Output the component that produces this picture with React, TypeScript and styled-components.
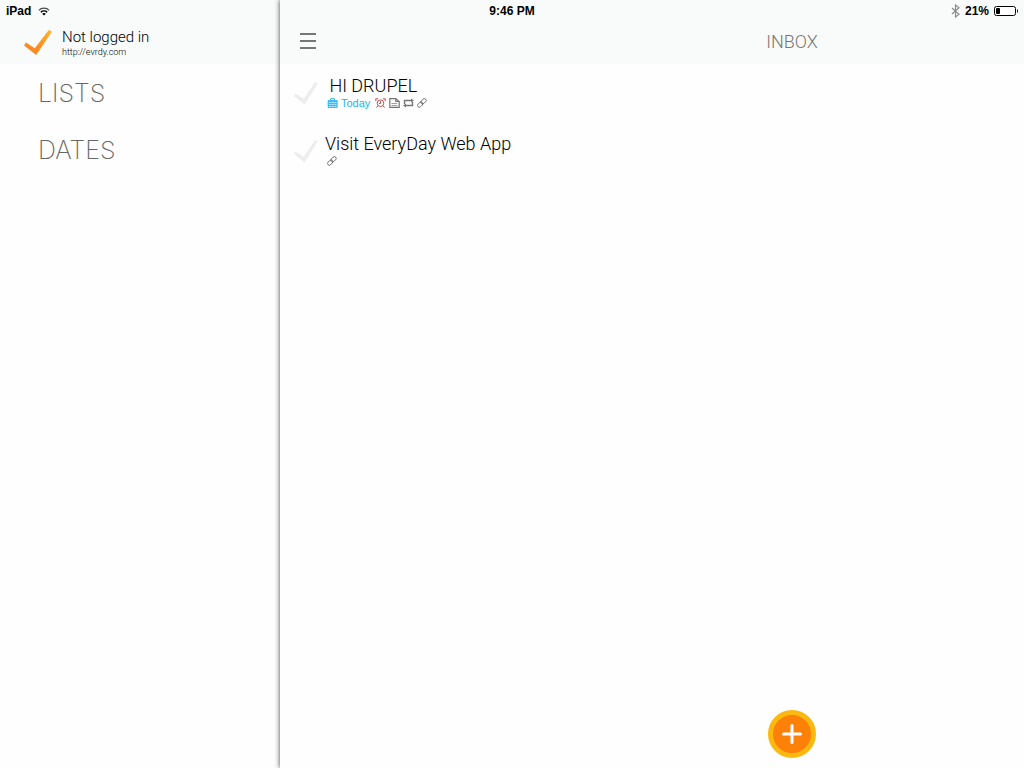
import React from 'react';
import styled, { createGlobalStyle } from 'styled-components';

const GlobalStyle = createGlobalStyle`
  *, *::before, *::after { box-sizing: border-box; }
  html, body, #root { height: 100%; margin: 0; }
  body {
    overflow: hidden;
    background: #fefefe;
    font-family: Roboto, "Liberation Sans", sans-serif;
    font-weight: 300;
    color: #000;
  }
  button { border: 0; padding: 0; background: none; font: inherit; color: inherit; cursor: pointer; }
  a { color: inherit; text-decoration: none; }
  svg { display: block; flex: none; }
`;

const Shell = styled.div`
  display: flex;
  height: 100%;
  overflow: hidden;
`;

const StatusBar = styled.div`
  position: absolute;
  top: 0;
  left: 0;
  right: 0;
  z-index: 3;
  display: grid;
  grid-template-columns: 1fr auto 1fr;
  align-items: center;
  height: 22px;
  padding: 0 6px;
  font: 700 12px/22px "Liberation Sans", sans-serif;
`;

const StatusGroup = styled.div<{ $end?: boolean }>`
  display: flex;
  align-items: center;
  gap: ${(p) => (p.$end ? 5 : 7)}px;
  justify-content: ${(p) => (p.$end ? 'flex-end' : 'flex-start')};
`;

const Sidebar = styled.aside`
  flex: 0 0 280px;
`;

const Header = styled.header`
  display: flex;
  align-items: center;
  height: 64px;
  padding: 20px 24px 0;
  background: #f9fbfa;
`;

const Account = styled.div`
  display: flex;
  align-items: center;
  gap: 10px;
`;

const AccountText = styled.div`
  display: flex;
  flex-direction: column;
`;

const AccountName = styled.span`
  font-size: 15px;
  line-height: 20px;
`;

const AccountLink = styled.a`
  font-size: 9px;
  line-height: 11px;
`;

const Nav = styled.nav`
  display: flex;
  flex-direction: column;
`;

const NavButton = styled.button`
  height: 57px;
  padding-left: 38px;
  text-align: left;
  font-family: Inter, "Liberation Sans", sans-serif;
  font-size: 25px;
  font-weight: 200;
  color: #666;
`;

const Main = styled.main`
  position: relative;
  flex: 0 0 100%;
  background: #fefefe;
  box-shadow: 0 0 5px rgba(0, 0, 0, 0.75);
`;

const MainHeader = styled(Header)`
  display: grid;
  grid-template-columns: 1fr auto 1fr;
  padding: 20px 20px 0;
`;

const MenuButton = styled.button`
  justify-self: start;
  padding-bottom: 2px;
`;

const Title = styled.h1`
  margin: 0;
  font-size: 18px;
  font-weight: 300;
  line-height: 22px;
  color: #777;
`;

const TaskList = styled.ul`
  margin: 0;
  padding: 0;
  list-style: none;
`;

const Task = styled.li`
  display: flex;
  align-items: flex-start;
  gap: 7px;
  height: 58px;
  padding: 11px 14px 0;
`;

const TaskCheck = styled.button`
  padding-top: 7px;
`;

const TaskName = styled.div`
  font-size: 18px;
  line-height: 22px;
  white-space: pre;
`;

const TaskMeta = styled.div`
  display: flex;
  align-items: center;
  gap: 3px;
  height: 12px;
  padding-left: 2px;
  color: #666;
`;

const Due = styled.span`
  margin-right: 2px;
  font-family: "Liberation Sans", sans-serif;
  font-size: 11px;
  line-height: 14px;
  font-weight: 400;
  color: #1cb4ee;
`;

const AddButton = styled.button`
  position: absolute;
  left: 50%;
  bottom: 10px;
  display: grid;
  place-items: center;
  width: 48px;
  height: 48px;
  margin-left: -24px;
  border: 5px solid #fbb80f;
  border-radius: 50%;
  background: #fd8008;
`;

const Wifi = () => (
  <svg width="12" height="9" viewBox="0 0 12 9" fill="none" stroke="#000">
    <path d="M.8 3.300C3.600.4 8.400.4 11.200 3.300" strokeWidth="1.200" opacity=".7" />
    <path d="M2.800 5.300c1.800-1.700 4.600-1.700 6.400 0" strokeWidth="1.500" />
    <path d="M6 8.600 4.100 6.700c1-1 2.800-1 3.800 0z" fill="#000" stroke="none" />
  </svg>
);

const Bluetooth = () => (
  <svg width="9" height="14" viewBox="0 0 9 14" fill="none" stroke="#8b8d8c" strokeWidth="1.200">
    <path d="M1 4l7 6.200L4.500 13V1L8 3.800 1 10" />
  </svg>
);

const Battery = () => (
  <svg width="24" height="10" viewBox="0 0 24 10">
    <rect x=".5" y=".5" width="21" height="9" rx="2" fill="#fff" stroke="#000" />
    <rect x="2" y="2" width="4" height="6" rx="1" fill="#000" />
    <path d="M23 3c1.200 0 1.200 4 0 4z" fill="#000" />
  </svg>
);

const Logo = () => (
  <svg width="28" height="26" viewBox="0 0 28 26">
    <defs>
      <linearGradient id="logo" x1="0" y1="1" x2="1" y2="0">
        <stop offset=".4" stopColor="#fb8c24" />
        <stop offset="1" stopColor="#fdb62a" />
      </linearGradient>
    </defs>
    <path d="M0 16.500 2 13.500 10.800 19.200 24.800 1 28 2.500 12.200 26z" fill="url(#logo)" />
  </svg>
);

const GhostCheck = () => (
  <svg width="24" height="23" viewBox="0 0 24 23">
    <path d="M0 14 1.500 11.500 9.500 17 21.200 0 24 1.300 10.500 22.500z" fill="#ededed" />
  </svg>
);

const MenuIcon = () => (
  <svg width="16" height="16" viewBox="0 0 16 16" fill="#757675">
    <path d="M0 0h16v2H0zM0 7h16v2H0zM0 14h16v2H0z" />
  </svg>
);

const CalendarIcon = () => (
  <svg width="11" height="10" viewBox="0 0 11 10">
    <path d="M3.500 2.500V1q0-.5.5-.5h3q.5 0 .5.5v1.500" fill="none" stroke="#3fbdf0" />
    <rect x=".7" y="2" width="10" height="8" rx="1" fill="#3fbdf0" />
    <path d="M2 4.500h7.400M2 6.500h7.400M2 8.500h7.400" stroke="#c4ebfb" strokeWidth=".9" />
    <path d="M4.200 4v5M7.200 4v5" stroke="#3fbdf0" strokeWidth=".7" />
  </svg>
);

const AlarmIcon = () => (
  <svg width="11" height="10" viewBox="0 0 11 10" fill="none" stroke="#c44b4b">
    <circle cx="5.500" cy="5.200" r="3.300" />
    <path d="M5.500 3.300v2.200H4M.8 3V.8H3M10.200 3V.8H8M2.800 7.800 1.500 9.600M8.200 7.800l1.300 1.800" />
  </svg>
);

const NoteIcon = () => (
  <svg width="11" height="10" viewBox="0 0 11 10" fill="none" stroke="#747474" strokeWidth="1.200">
    <path d="M.8.6h6l3.400 2.900v5.900H.8zM6.800.6v2.900h3.400" />
    <path d="M2.500 5.500h5.800M2.500 7.500h5.800" strokeWidth=".7" />
  </svg>
);

const RepeatIcon = () => (
  <svg width="11" height="10" viewBox="0 0 11 10">
    <path d="M1.500 6V2.500h7M9.500 4v3.500h-7" fill="none" stroke="#777" strokeWidth="1.400" />
    <path d="M8 .5 11 2.500 8 4.500zM3 5.500 0 7.500l3 2z" fill="#777" />
  </svg>
);

const LinkIcon = () => (
  <svg width="10" height="10" viewBox="0 0 10 10" fill="none" stroke="#666" strokeWidth=".9">
    <rect x="-3" y="-1.800" width="6" height="3.600" rx="1.800" transform="translate(6.500 3.300) rotate(-45)" />
    <rect x="-3" y="-1.800" width="6" height="3.600" rx="1.800" transform="translate(3.200 6.600) rotate(-45)" />
  </svg>
);

const PlusIcon = () => (
  <svg width="20" height="20" viewBox="0 0 20 20" stroke="#fff" strokeWidth="3" strokeLinecap="round">
    <path d="M10 1.500v17M1.500 10h17" />
  </svg>
);

export default function App() {
  return (
    <>
      <GlobalStyle />
      <StatusBar>
        <StatusGroup>
          <span>iPad</span>
          <Wifi />
        </StatusGroup>
        <span>9:46 PM</span>
        <StatusGroup $end>
          <Bluetooth />
          <span>21%</span>
          <Battery />
        </StatusGroup>
      </StatusBar>
      <Shell>
        <Sidebar>
          <Header>
            <Account>
              <Logo />
              <AccountText>
                <AccountName>Not logged in</AccountName>
                <AccountLink href="http://evrdy.com">http://evrdy.com</AccountLink>
              </AccountText>
            </Account>
          </Header>
          <Nav>
            <NavButton>LISTS</NavButton>
            <NavButton>DATES</NavButton>
          </Nav>
        </Sidebar>
        <Main>
          <MainHeader>
            <MenuButton aria-label="Menu"><MenuIcon /></MenuButton>
            <Title>INBOX</Title>
          </MainHeader>
          <TaskList>
            <Task>
              <TaskCheck aria-label="Complete HI DRUPEL"><GhostCheck /></TaskCheck>
              <div>
                <TaskName>{' HI DRUPEL'}</TaskName>
                <TaskMeta>
                  <CalendarIcon />
                  <Due>Today</Due>
                  <AlarmIcon />
                  <NoteIcon />
                  <RepeatIcon />
                  <LinkIcon />
                </TaskMeta>
              </div>
            </Task>
            <Task>
              <TaskCheck aria-label="Complete Visit EveryDay Web App"><GhostCheck /></TaskCheck>
              <div>
                <TaskName>Visit EveryDay Web App</TaskName>
                <TaskMeta>
                  <LinkIcon />
                </TaskMeta>
              </div>
            </Task>
          </TaskList>
          <AddButton aria-label="Add task"><PlusIcon /></AddButton>
        </Main>
      </Shell>
    </>
  );
}
